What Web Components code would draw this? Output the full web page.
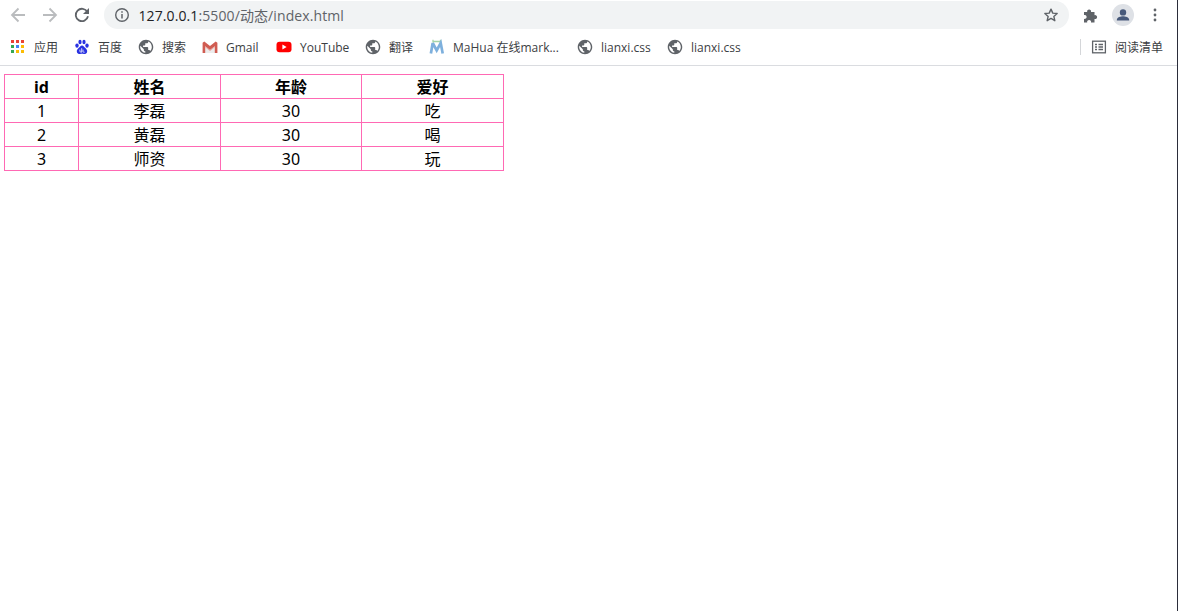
<!DOCTYPE html>
<html lang="zh">
<head>
<meta charset="utf-8">
<title>动态</title>
<style>
html,body{margin:0;padding:0;height:100%;background:#fff;overflow:hidden}
body{font-family:"Open Sans","Noto Sans CJK SC",sans-serif}
</style>
</head>
<body>
<browser-window>
  <browser-toolbar url-host="127.0.0.1" url-rest=":5500/动态/index.html"></browser-toolbar>
  <bookmark-bar>
    <bookmark-item label="应用" icon="apps" w="24"></bookmark-item>
    <bookmark-item label="百度" icon="baidu" w="24"></bookmark-item>
    <bookmark-item label="搜索" icon="globe" w="24"></bookmark-item>
    <bookmark-item label="Gmail" icon="gmail" w="34"></bookmark-item>
    <bookmark-item label="YouTube" icon="youtube" w="49"></bookmark-item>
    <bookmark-item label="翻译" icon="globe" w="24"></bookmark-item>
    <bookmark-item label="MaHua 在线mark..." icon="mahua" w="108"></bookmark-item>
    <bookmark-item label="lianxi.css" icon="globe" w="50"></bookmark-item>
    <bookmark-item label="lianxi.css" icon="globe" w="50"></bookmark-item>
    <bookmark-item slot="end" label="阅读清单" icon="list" w="48"></bookmark-item>
  </bookmark-bar>
  <data-table columns="id,姓名,年龄,爱好" rows="1,李磊,30,吃;2,黄磊,30,喝;3,师资,30,玩"></data-table>
</browser-window>
<script>
const GLOBE = "M12 2C6.48 2 2 6.48 2 12s4.48 10 10 10 10-4.48 10-10S17.52 2 12 2zm-1 17.93c-3.95-.49-7-3.85-7-7.93 0-.62.08-1.21.21-1.79L9 15v1c0 1.1.9 2 2 2v1.93zm6.9-2.54c-.26-.81-1-1.39-1.9-1.39h-1v-3c0-.55-.45-1-1-1H8v-2h2c.55 0 1-.45 1-1V7h2c1.1 0 2-.9 2-2v-.41c2.93 1.19 5 4.06 5 7.41 0 2.08-.8 3.97-2.1 5.39z";
const sq = (x,y,c)=>`<rect x="${x}" y="${y}" width="3" height="3" fill="${c}"/>`;
const ICONS = {
  apps: `<svg width="16" height="16" viewBox="0 0 16 16">
    ${sq(1,1,"#ea4335")}${sq(6,1,"#ea4335")}${sq(11,1,"#ea4335")}
    ${sq(1,6,"#34a853")}${sq(6,6,"#4285f4")}${sq(11,6,"#fbbc04")}
    ${sq(1,11,"#34a853")}${sq(6,11,"#fbbc04")}${sq(11,11,"#fbbc04")}</svg>`,
  baidu: `<svg width="16" height="16" viewBox="0 0 16 16" fill="#2932e1">
    <ellipse cx="3" cy="6.6" rx="1.7" ry="2.2"/><ellipse cx="6" cy="3" rx="1.6" ry="2.2"/><ellipse cx="10" cy="3" rx="1.6" ry="2.2"/><ellipse cx="13" cy="6.6" rx="1.7" ry="2.2"/>
    <path d="M8 6.4c-1.6 0-2.2 1.5-3.3 2.6C3.6 10 2.4 11 2.9 13c.4 1.6 2 2.2 3.2 2 .8-.1 1.3-.3 1.9-.3s1.1.2 1.9.3c1.2.2 2.8-.4 3.2-2 .5-2-.7-3-1.8-4C10.2 7.9 9.6 6.4 8 6.4z"/>
    <path d="M5.9 10.6v1.500c0 .7.400 1.100 1 1.100h.8M7.700 9.200v4M9 10.600v2c0 .4.300.6.600.6h1" fill="none" stroke="#fff" stroke-width=".8"/></svg>`,
  globe: `<svg width="16" height="16" viewBox="1 1 22 22"><path d="${GLOBE}" fill="#5f6368"/></svg>`,
  gmail: `<svg width="16" height="16" viewBox="0 0 16 16">
    <path d="M1.500 3.500 8 8.500l6.500-5V14h-13z" fill="#ececec"/>
    <path d="M.6 3.800V14h2.600V7.300L8 11l4.800-3.700V14h2.600V3.800L13.700 2.600 8 7 2.300 2.600z" fill="#d05c52"/>
    <path d="M3.200 7.300 8 11l4.800-3.700v.9L8 12 3.200 8.200z" fill="#e9a29c"/></svg>`,
  youtube: `<svg width="16" height="16" viewBox="0 0 16 16"><rect x="0.500" y="2.700" width="15" height="10.600" rx="3" fill="#f00"/><path d="M6.400 5.500v5l4.200-2.500z" fill="#fff"/></svg>`,
  mahua: `<svg width="16" height="16" viewBox="0 0 16 16" fill="none">
    <path d="M4 .8v3M11.500 .8v3M4 2.500h7.500" stroke="#a6d4a8" stroke-width="1.300"/>
    <path d="M3.700 4 1.900 14.500M3.700 4l4 7.500 4-7.500 2 10.500" stroke="#7eb0dd" stroke-width="2.700"/></svg>`,
  list: `<svg width="16" height="16" viewBox="0 0 16 16" fill="none" stroke="#5f6368" stroke-width="1.300"><rect x="1.600" y="2.200" width="12.800" height="11.600"/><path d="M4 5.500h2M4 8h2M4 10.500h2M7.500 5.500H12M7.500 8H12M7.500 10.500H12"/></svg>`
};

class BrowserWindow extends HTMLElement {
  constructor(){
    super();
    this.attachShadow({mode:"open"}).innerHTML = `<style>
      :host{display:flex;flex-direction:column;width:1178px;height:611px;box-sizing:border-box;border-right:1px solid #2b2d3a;background:#fff}
    </style><slot></slot>`;
  }
}

class BrowserToolbar extends HTMLElement {
  connectedCallback(){
    if(this.shadowRoot) return;
    const host = this.getAttribute("url-host"), rest = this.getAttribute("url-rest");
    this.attachShadow({mode:"open"}).innerHTML = `<style>
      :host{display:flex;align-items:center;height:30px;flex:none;font-family:"Open Sans","Noto Sans CJK SC",sans-serif}
      .nav{display:flex;align-items:center;width:32px;height:30px;justify-content:center;flex:none}
      .left{display:flex;padding-left:2px;flex:none}
      .omni{flex:1;margin-left:6px;height:28px;border-radius:14px;background:#f1f3f4;display:flex;align-items:center;padding:0 8px 0 10px;min-width:0}
      .url{margin-left:8.5px;flex:1;font-size:14px;color:#5f6368;white-space:nowrap;letter-spacing:.1px}
      .url b{font-weight:400;color:#202124}
      .right{display:flex;align-items:center;flex:none;padding:0 6px}
    </style>
    <div class="left">
      <div class="nav"><svg width="16" height="16" viewBox="0 0 16 16" fill="none" stroke="#babcbe" stroke-width="1.800"><path d="M15 8H2M8.500 1.500 2 8l6.500 6.500"/></svg></div>
      <div class="nav"><svg width="16" height="16" viewBox="0 0 16 16" fill="none" stroke="#babcbe" stroke-width="1.800"><path d="M1 8h13M7.500 1.500 14 8l-6.500 6.500"/></svg></div>
      <div class="nav"><svg width="16" height="16" viewBox="0 0 16 16" fill="none"><path d="M13.400 5A6.200 6.200 0 1 0 14 9.300" stroke="#5f6368" stroke-width="1.800"/><path d="M15 1v6H9z" fill="#5f6368"/></svg></div>
    </div>
    <div class="omni">
      <svg width="16" height="16" viewBox="0 0 16 16" fill="none" style="flex:none"><circle cx="8" cy="8" r="6.300" stroke="#5f6368" stroke-width="1.400"/><path d="M8 7v4.500" stroke="#5f6368" stroke-width="1.500"/><path d="M8 4.200v1.600" stroke="#5f6368" stroke-width="1.500"/></svg>
      <span class="url"><b>${host}</b>${rest}</span>
      <svg width="16" height="16" viewBox="0 0 18 18" fill="none" style="flex:none;margin-right:2px"><path d="M9 2.400l2 4.500 4.900.5-3.700 3.200 1.100 4.800L9 12.900l-4.300 2.500 1.100-4.800L2.100 7.400 7 6.900z" stroke="#5f6368" stroke-width="1.600" stroke-linejoin="round"/></svg>
    </div>
    <div class="right">
      <div class="nav"><svg width="16" height="16" viewBox="0 0 16 16"><path d="M1 5h3.200a2 2 0 1 1 3.800 0h3.500v3.200a2 2 0 1 1 0 3.800V15.500H8a2 2 0 1 0-3.800 0H1V11.800a2 2 0 1 0 0-3.800z" fill="#5f6368"/></svg></div>
      <div class="nav"><svg width="22" height="22" viewBox="0 0 22 22"><circle cx="11" cy="11" r="11" fill="#dee1e6"/><circle cx="11" cy="8.400" r="3.200" fill="#47597a"/><path d="M4.800 16c0-2.800 4-3.800 6.200-3.800s6.200 1 6.200 3.800v.6H4.800z" fill="#47597a"/></svg></div>
      <div class="nav"><svg width="16" height="16" viewBox="0 0 16 16" fill="#5f6368"><circle cx="8" cy="3" r="1.400"/><circle cx="8" cy="8" r="1.400"/><circle cx="8" cy="13" r="1.400"/></svg></div>
    </div>`;
  }
}

class BookmarkBar extends HTMLElement {
  constructor(){
    super();
    this.attachShadow({mode:"open"}).innerHTML = `<style>
      :host{display:flex;align-items:center;flex:none;height:36px;box-sizing:border-box;border-bottom:1px solid #dadce0;padding:0 14px 1px 10px}
      .main{display:flex;gap:16px;flex:1;align-items:center}
      .end{display:flex;align-items:center;border-left:1px solid #d4d6d9;padding-left:10px;height:16px}
    </style><div class="main"><slot></slot></div><div class="end"><slot name="end"></slot></div>`;
  }
}

class BookmarkItem extends HTMLElement {
  connectedCallback(){
    if(this.shadowRoot) return;
    this.attachShadow({mode:"open"}).innerHTML = `<style>
      :host{display:flex;align-items:center;gap:8px;font-size:12px;color:#3c4043;white-space:nowrap;font-family:"Open Sans","Noto Sans CJK SC",sans-serif}
      svg{display:block;flex:none}
      span{display:block;width:${this.getAttribute("w")}px}
    </style>${ICONS[this.getAttribute("icon")]}<span>${this.getAttribute("label")}</span>`;
  }
}

class DataTable extends HTMLElement {
  connectedCallback(){
    if(this.shadowRoot) return;
    const cols = this.getAttribute("columns").split(",");
    const rows = this.getAttribute("rows").split(";").map(r=>r.split(","));
    this.attachShadow({mode:"open"}).innerHTML = `<style>
      :host{display:block;padding:8px 4px;font-family:"Noto Sans","Noto Sans CJK SC",sans-serif;font-size:16px;color:#000}
      table{border-collapse:collapse;table-layout:fixed;width:500px}
      th,td{border:1px solid #ff69b4;height:23px;box-sizing:border-box;padding:1px 0 0;text-align:center;line-height:22px;font-size:16px;vertical-align:middle}
      th{font-weight:700}
    </style>
    <table>
      <colgroup><col style="width:74px"><col style="width:142px"><col style="width:141px"><col style="width:142px"></colgroup>
      <thead><tr>${cols.map(c=>`<th>${c}</th>`).join("")}</tr></thead>
      <tbody>${rows.map(r=>`<tr>${r.map(c=>`<td>${c}</td>`).join("")}</tr>`).join("")}</tbody>
    </table>`;
  }
}

customElements.define("browser-window", BrowserWindow);
customElements.define("browser-toolbar", BrowserToolbar);
customElements.define("bookmark-bar", BookmarkBar);
customElements.define("bookmark-item", BookmarkItem);
customElements.define("data-table", DataTable);
</script>
</body>
</html>
